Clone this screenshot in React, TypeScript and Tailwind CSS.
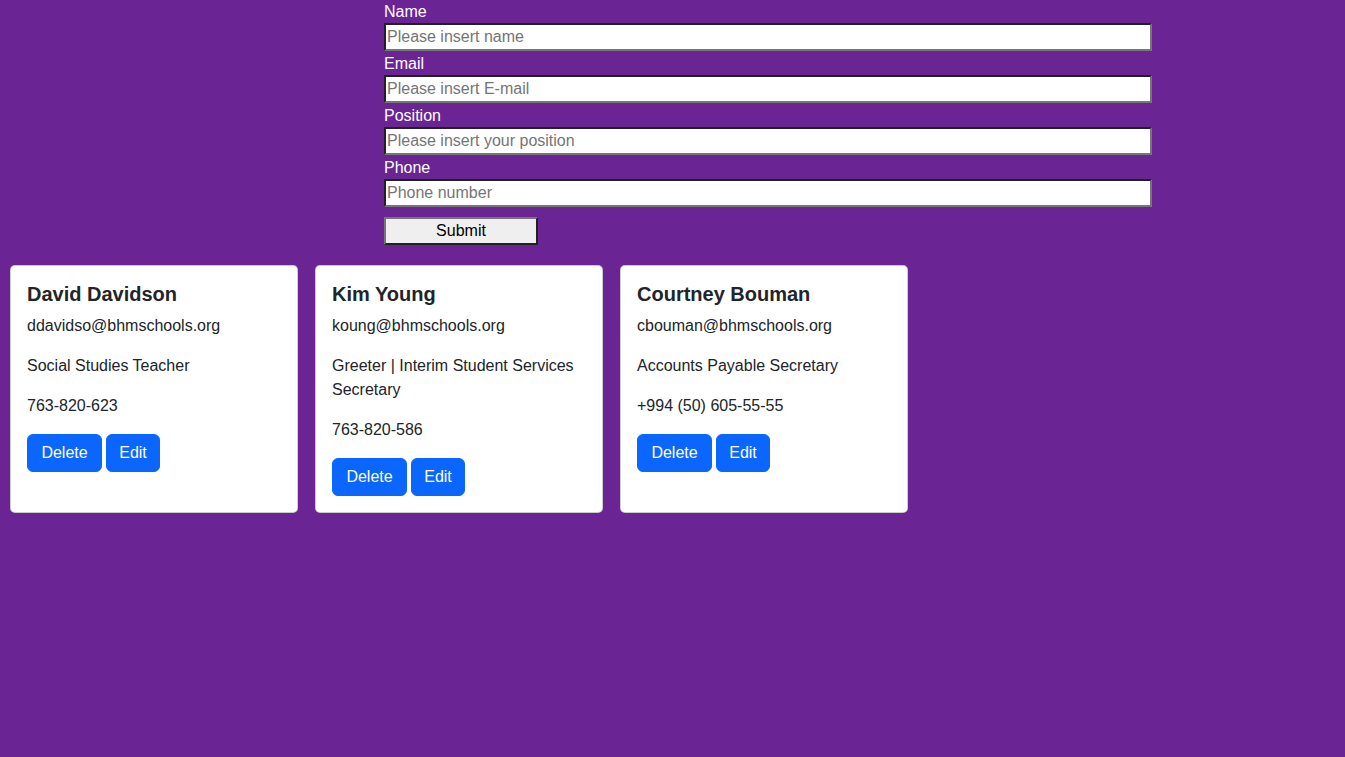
const people = [
  { name: "David Davidson", email: "ddavidso@bhmschools.org", position: "Social Studies Teacher", phone: "763-820-623" },
  { name: "Kim Young", email: "koung@bhmschools.org", position: "Greeter | Interim Student Services Secretary", phone: "763-820-586" },
  { name: "Courtney Bouman", email: "cbouman@bhmschools.org", position: "Accounts Payable Secretary", phone: "+994 (50) 605-55-55" },
];

const fields = [
  { label: "Name", placeholder: "Please insert name" },
  { label: "Email", placeholder: "Please insert E-mail" },
  { label: "Position", placeholder: "Please insert your position" },
  { label: "Phone", placeholder: "Phone number" },
];

export default function App() {
  return (
    <div className="min-h-screen overflow-hidden bg-[#6a2494] text-[16px] leading-[24px] font-['Liberation_Sans',Arial,sans-serif]">
      <form className="ml-[384px] -mt-px w-[768px] flex flex-col" onSubmit={(e) => e.preventDefault()}>
        {fields.map((f) => (
          <div key={f.label} className="flex flex-col">
            <label className="text-white h-[24px] pt-px">{f.label}</label>
            <input
              type="text"
              placeholder={f.placeholder}
              className="h-[28px] w-full bg-white px-[1px] text-black border-2 border-[#767676] [border-style:inset] placeholder:text-[#757575] outline-none"
            />
          </div>
        ))}
        <button
          type="submit"
          className="mt-[10px] h-[28px] w-[154px] bg-[#efefef] text-black border-2 border-[#767676] [border-style:outset] leading-[22px]"
        >
          Submit
        </button>
      </form>

      <div className="flex items-stretch gap-[17px] pl-[10px] mt-[20px]">
        {people.map((p) => (
          <div key={p.name} className="w-[288px] bg-white border border-black/20 rounded-[5px] p-4 text-[#212529]">
            <h5 className="text-[20px] leading-[24px] font-bold mb-2">{p.name}</h5>
            <p className="mb-4">{p.email}</p>
            <p className="mb-4">{p.position}</p>
            <p className="mb-4">{p.phone}</p>
            <div className="flex gap-1">
              <button className="w-[75px] bg-[#0b66fd] text-white rounded-[6px] py-[6px] border border-[#0b66fd]">Delete</button>
              <button className="w-[54px] bg-[#0b66fd] text-white rounded-[6px] py-[6px] border border-[#0b66fd]">Edit</button>
            </div>
          </div>
        ))}
      </div>
    </div>
  );
}
